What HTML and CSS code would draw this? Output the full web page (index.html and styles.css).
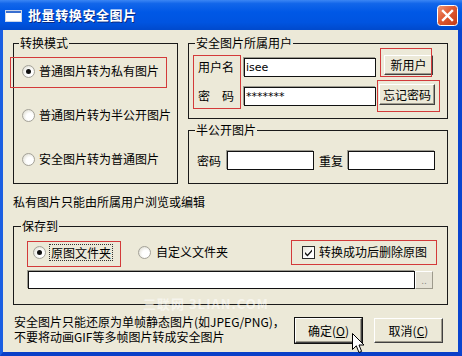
FILE: index.html
```html
<!DOCTYPE html>
<html lang="zh-CN">
<head>
<meta charset="utf-8">
<title>批量转换安全图片</title>
<link rel="stylesheet" href="styles.css">
</head>
<body>
<div class="window">
  <div class="titlebar">
    <svg class="app-icon" width="17" height="12" viewBox="0 0 17 12">
      <rect x="0.5" y="0.5" width="16" height="11" fill="#fff" stroke="#c9d4e8"/>
      <rect x="1" y="1" width="15" height="2" fill="#3a6fd0"/>
    </svg>
    <span class="title">批量转换安全图片</span>
    <div class="close">
      <svg width="21" height="21" viewBox="0 0 21 21">
        <defs>
          <linearGradient id="cg" x1="0" y1="0" x2="1" y2="1">
            <stop offset="0" stop-color="#f09a78"/>
            <stop offset="0.45" stop-color="#e05a32"/>
            <stop offset="1" stop-color="#c23a14"/>
          </linearGradient>
        </defs>
        <rect x="0.5" y="0.5" width="20" height="20" rx="3" fill="url(#cg)" stroke="#fff"/>
        <path d="M6 6 L15 15 M15 6 L6 15" stroke="#fff" stroke-width="2.4" stroke-linecap="square"/>
      </svg>
    </div>
  </div>
  <div class="client">
    <div class="top">
      <fieldset class="group mode">
        <legend class="lg-mode">转换模式</legend>
        <div class="mode-list">
          <div class="opt mark mark-mode"><span class="radio checked"></span><span>普通图片转为私有图片</span></div>
          <div class="opt"><span class="radio"></span><span>普通图片转为半公开图片</span></div>
          <div class="opt"><span class="radio"></span><span>安全图片转为普通图片</span></div>
        </div>
      </fieldset>
      <div class="right-col">
        <fieldset class="group user">
          <legend class="lg-user">安全图片所属用户</legend>
          <div class="user-body">
            <div class="labels mark mark-labels">
              <span class="lbl">用户名</span>
              <span class="lbl spaced">密<i></i>码</span>
            </div>
            <div class="inputs">
              <div class="field wide">isee</div>
              <div class="field wide">*******</div>
            </div>
            <div class="btns">
              <div class="btn btn-new mark mark-new">新用户</div>
              <div class="btn btn-forget mark mark-forget">忘记密码</div>
            </div>
          </div>
        </fieldset>
        <fieldset class="group half">
          <legend class="lg-half">半公开图片</legend>
          <div class="half-body">
            <span class="lbl">密码</span>
            <div class="field short"></div>
            <span class="lbl">重复</span>
            <div class="field short"></div>
          </div>
        </fieldset>
      </div>
    </div>
    <p class="note">私有图片只能由所属用户浏览或编辑</p>
    <fieldset class="group save">
      <legend class="lg-save">保存到</legend>
      <div class="save-body">
        <div class="save-row">
          <div class="opt2 mark mark-orig"><span class="radio checked"></span><span class="focus">原图文件夹</span></div>
          <div class="opt2 custom"><span class="radio"></span><span>自定义文件夹</span></div>
          <div class="opt2 chk mark mark-chk">
            <span class="checkbox">
              <svg width="11" height="11" viewBox="0 0 11 11"><path d="M2 5 L4.5 7.5 L9 2.5 L9 4.5 L4.5 9.5 L2 7 Z" fill="#111"/></svg>
            </span>
            <span>转换成功后删除原图</span>
          </div>
        </div>
        <div class="path-row">
          <div class="field path"></div>
          <div class="browse">..</div>
        </div>
      </div>
    </fieldset>
    <div class="bottom">
      <div class="hint">
        <div class="hint-line">安全图片只能还原为单帧静态图片(如JPEG/PNG)，</div>
        <div class="hint-line">不要将动画GIF等多帧图片转成安全图片</div>
      </div>
      <div class="btn big default">确定(<u>O</u>)</div>
      <div class="btn big cancel">取消(<u>C</u>)</div>
    </div>
  </div>
  <div class="watermark">三联网 3LIAN.COM</div>
  <svg class="cursor" width="13" height="21" viewBox="0 0 13 21">
    <path d="M0.5 0.5 L0.5 16.5 L4.3 12.8 L7 19.5 L9.6 18.4 L7 12 L12 12 Z" fill="#fff" stroke="#000" stroke-width="1" stroke-linejoin="miter"/>
  </svg>
</div>
</body>
</html>
```
FILE: styles.css
```css
* { box-sizing: border-box; }
html, body { margin: 0; padding: 0; }
body {
  width: 462px;
  height: 356px;
  overflow: hidden;
  font-family: "Noto Sans CJK SC", "Liberation Sans", sans-serif;
  font-size: 12px;
  color: #000;
}
.window {
  position: relative;
  width: 462px;
  height: 356px;
  background: #0a48d8;
  display: flex;
  flex-direction: column;
  border-left: 3px solid #1b5fe2;
  border-right: 4px solid #0a44cf;
  border-bottom: 4px solid #0a3fc8;
}
.titlebar {
  height: 30px;
  margin: 0 -4px 0 -3px;
  background: linear-gradient(#3b86f4 0%, #1266ea 12%, #0058e6 40%, #0054e0 75%, #0049cc 100%);
  display: flex;
  align-items: center;
  padding-left: 5px;
  flex: none;
}
.app-icon { margin-top: 1px; }
.title {
  margin-left: 6px;
  color: #fff;
  font-weight: bold;
  font-size: 13px;
  letter-spacing: 0.6px;
  text-shadow: 1px 1px 0 #0a2a80;
  line-height: 16px;
}
.close {
  margin-left: auto;
  margin-right: 4px;
  width: 21px;
  height: 21px;
  margin-top: 1px;
}
.close svg { display: block; }
.client {
  flex: 1;
  background: #ece9d8;
  padding: 6px 10px 0 10px;
  display: flex;
  flex-direction: column;
}
.top {
  display: flex;
  gap: 10px;
  height: 148px;
}
.group {
  margin: 0;
  padding: 0;
  border: 1px solid #1a1a1a;
  min-width: 0;
}
.group legend {
  padding: 0 1px;
  line-height: 14px;
  height: 14px;
  font-size: 12px;
}
.lg-mode { margin-left: 5px; }
.lg-user { margin-left: 6px; }
.lg-half { margin-left: 6px; }
.lg-save { margin-left: 7px; }

.mode { width: 165px; height: 148px; }
.mode-list {
  padding: 11px 0 0 8px;
  display: flex;
  flex-direction: column;
  gap: 24px;
}
.opt, .opt2 {
  display: flex;
  align-items: center;
  gap: 4px;
  height: 20px;
  line-height: 14px;
  white-space: nowrap;
  position: relative;
}
.radio {
  width: 13px;
  height: 13px;
  border-radius: 50%;
  border: 1px solid #a4a299;
  background: radial-gradient(circle at 62% 62%, #ffffff 0%, #ffffff 35%, #ecebe4 65%, #cfccbf 100%);
  position: relative;
  flex: none;
}
.radio.checked::after {
  content: "";
  position: absolute;
  left: 3px;
  top: 3px;
  width: 5px;
  height: 5px;
  border-radius: 50%;
  background: #111;
}
.mark::after {
  content: "";
  position: absolute;
  border: 1px solid #d33a3a;
  pointer-events: none;
}
.mark-mode::after { left: -12px; top: -4px; width: 155px; height: 29px; }

.right-col {
  width: 260px;
  display: flex;
  flex-direction: column;
  gap: 4px;
}
.user { height: 83px; }
.user-body {
  padding: 6px 0 0 9px;
  display: flex;
}
.labels {
  width: 36px;
  display: flex;
  flex-direction: column;
  gap: 7px;
  position: relative;
}
.mark-labels::after { left: -5px; top: -1px; width: 46px; height: 52px; }
.lbl {
  height: 22px;
  line-height: 22px;
  white-space: nowrap;
  display: flex;
  align-items: center;
}
.lbl.spaced i { display: inline-block; width: 12px; }
.inputs {
  margin-left: 10px;
  display: flex;
  flex-direction: column;
  gap: 7px;
}
.field {
  background: #fff;
  border: 1px solid #111;
  box-shadow: -1px -1px 0 #9c9a90;
  font-family: "DejaVu Sans", "Liberation Sans", sans-serif;
  font-size: 11px;
  line-height: 17px;
  padding-left: 1px;
}
.field.wide { width: 132px; height: 19px; margin-top: 2px; margin-bottom: 1px; }
.btns {
  display: flex;
  flex-direction: column;
  gap: 7px;
}
.btn {
  background: #ece9d8;
  border: 1px solid;
  border-color: #ffffff #404040 #404040 #ffffff;
  box-shadow: inset -1px -1px 0 #9d9a8c;
  display: flex;
  align-items: center;
  justify-content: center;
  line-height: 14px;
  white-space: nowrap;
  position: relative;
}
.btn-new { width: 49px; height: 20px; margin-left: 8px; margin-top: -1px; }
.btn-forget { width: 56px; height: 21px; margin-left: 3px; margin-top: 2px; }
.mark-new::after { left: -5px; top: -8px; width: 50px; height: 27px; }
.mark-forget::after { left: -3px; top: -5px; width: 61px; height: 30px; }

.half { height: 61px; }
.half-body {
  padding: 14px 0 0 8px;
  display: flex;
  align-items: center;
}
.half-body .lbl { height: 19px; line-height: 19px; }
.field.short { width: 87px; height: 19px; margin: 0 5px 0 6px; }
.half-body .field.short:last-child { margin-left: 5px; }

.note {
  margin: 11px 0 0 0;
  line-height: 14px;
  height: 14px;
}
.save {
  margin-top: 10px;
  height: 86px;
  width: 435px;
}
.save-body {
  padding: 11px 0 0 14px;
}
.save-row {
  display: flex;
  align-items: center;
  height: 16px;
  margin-left: 5px;
}
.opt2 { height: 16px; }
.focus {
  outline: 1px dotted #333;
  padding: 0 1px;
  margin-left: 0;
  line-height: 15px;
}
.mark-orig::after { left: -6px; top: -3px; width: 92px; height: 24px; }
.custom { margin-left: 26px; gap: 5px; }
.chk { margin-left: 74px; gap: 4px; }
.mark-chk::after { left: -11px; top: -4px; width: 144px; height: 23px; }
.checkbox {
  width: 13px;
  height: 13px;
  border: 1px solid #2a2a2a;
  background: linear-gradient(135deg, #e4e2d8 0%, #ffffff 60%);
  display: flex;
  align-items: center;
  justify-content: center;
  flex: none;
}
.checkbox svg { display: block; }
.path-row {
  margin-top: 11px;
  display: flex;
  height: 18px;
}
.field.path { width: 387px; height: 18px; }
.browse {
  width: 18px;
  height: 18px;
  background: #e6e3d6;
  border: 1px solid;
  border-color: #fff #9d9a8c #9d9a8c #fff;
  color: #8a887e;
  font-size: 9px;
  line-height: 18px;
  text-align: center;
  font-family: "DejaVu Sans", sans-serif;
}
.bottom {
  margin-top: 9px;
  display: flex;
  align-items: flex-start;
}
.hint {
  flex: 1;
  padding-left: 1px;
  white-space: nowrap;
}
.hint-line {
  line-height: 15px;
  height: 15px;
}
.btn.big { height: 25px; margin-top: 4px; }
.default {
  width: 67px;
  outline: 1px solid #111;
  outline-offset: 0;
  border-color: #ffffff #404040 #404040 #ffffff;
}
.cancel { width: 69px; margin-left: 12px; margin-right: 5px; }
.btn u { text-decoration: underline; }
.watermark {
  position: absolute;
  left: 140px;
  top: 297px;
  color: rgba(255, 255, 255, 0.55);
  font-weight: bold;
  font-size: 13px;
  letter-spacing: 1px;
  line-height: 14px;
}
.cursor {
  position: absolute;
  left: 349px;
  top: 333px;
}
```
